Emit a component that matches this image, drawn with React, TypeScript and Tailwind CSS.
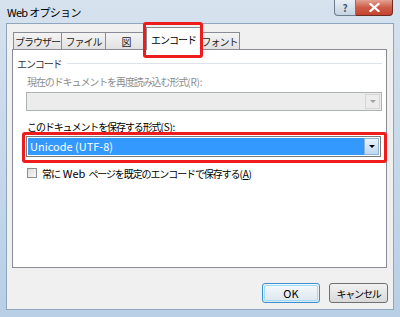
import React from "react";

function Tab({ label, selected, w }: { label: string; selected?: boolean; w: string }) {
  if (selected) {
    return (
      <div
        className={`${w} h-[23px] -mb-[1px] -ml-[1px] -mr-[1px] relative z-10 bg-white border border-[#898c95] border-b-0 flex items-center justify-center text-[10px] tracking-[-1px] whitespace-nowrap text-black`}
      >
        {label}
      </div>
    );
  }
  return (
    <div
      className={`${w} h-[17px] bg-gradient-to-b from-[#f4f4f4] to-[#e2e2e2] border border-[#898c95] border-b-0 -ml-[1px] first:ml-0 flex items-center justify-center text-[10px] tracking-[-1px] whitespace-nowrap text-[#222]`}
    >
      {label}
    </div>
  );
}

function Ascii({ children }: { children: React.ReactNode }) {
  return <span className="tracking-[-0.2px]">{children}</span>;
}

export default function App() {
  return (
    <div className="w-[400px] h-[317px] flex flex-col bg-gradient-to-b from-[#d6e2ee] via-[#c6d8ea] to-[#b8cfe6] font-['Noto_Sans_CJK_JP','Noto_Sans',sans-serif] relative overflow-hidden">
      {/* title bar */}
      <div className="h-[23px] flex items-start relative">
        <div className="pl-[7px] pt-[4px] text-[11px] tracking-[-0.7px] text-black leading-[16px] whitespace-nowrap">Web オプション</div>
        <div className="ml-auto mr-[7px] flex">
          <div className="w-[22px] h-[16px] border border-[#6d7b8c] border-t-0 rounded-bl-[4px] bg-gradient-to-b from-[#e8eef5] to-[#c5d3e2] flex items-center justify-center text-[10px] text-[#4a5a6e] font-bold leading-none">
            ?
          </div>
          <div className="w-[37px] h-[16px] border border-[#6d2a22] border-t-0 border-l-0 rounded-br-[4px] bg-gradient-to-b from-[#e3a192] via-[#cc5b47] to-[#c5432f] flex items-center justify-center">
            <svg width="11" height="9" viewBox="0 0 11 9">
              <path d="M1.5 1 L9.5 8 M9.5 1 L1.5 8" stroke="white" strokeWidth="2.2" strokeLinecap="square" />
            </svg>
          </div>
        </div>
      </div>

      {/* client */}
      <div className="mx-[6px] h-[287px] bg-[#f0f0f0] border border-[#8fa6bf] flex flex-col relative">
        {/* tabs */}
        <div className="mt-[8px] ml-[6px] h-[17px] flex items-end">
          <Tab label="ブラウザー" w="w-[49px]" />
          <Tab label="ファイル" w="w-[45px]" />
          <Tab label="図" w="w-[42px]" />
          <Tab label="エンコード" selected w="w-[55px]" />
          <Tab label="フォント" w="w-[41px]" />
        </div>
        {/* panel */}
        <div className="ml-[5px] w-[375px] h-[219px] bg-white border border-[#898c95] relative text-[10px] tracking-[-1.1px]">
          {/* group label */}
          <div className="flex items-center mt-[5px] ml-[4px] h-[16px]">
            <span className="text-[#333]">エンコード</span>
            <div className="flex-1 ml-[5px] mr-[4px] h-[1px] bg-[#dde3ea]" />
          </div>
          <div className="ml-[14px] mt-[3px] text-[#8d8d8d] leading-[16px] whitespace-nowrap">
            現在のドキュメントを再度読み込む形式<Ascii>(R):</Ascii>
          </div>
          <div className="ml-[13px] mt-[2px] w-[356px] h-[19px] border border-[#adb2b5] bg-[#ececec] flex justify-end p-[1px]">
            <div className="w-[15px] h-full border border-[#d5d5d5] flex items-center justify-center">
              <svg width="6" height="4" viewBox="0 0 6 4"><path d="M0 0 H6 L3 3 Z" fill="#a0a0a0" /></svg>
            </div>
          </div>
          <div className="ml-[14px] mt-[8px] text-black leading-[16px] whitespace-nowrap">
            このドキュメントを保存する形式<Ascii>(S):</Ascii>
          </div>
          <div className="ml-[13px] mt-[1px] w-[355px] h-[21px] border border-[#7a7a7a] bg-white flex p-[1px]">
            <div className="flex-1 bg-[#3399ff] text-white text-[11px] tracking-normal leading-[17px] pl-[2px]">Unicode (UTF-8)</div>
            <div className="w-[15px] h-full border border-[#8eb1d6] bg-gradient-to-b from-[#eaf4fc] to-[#bcd8f0] flex items-center justify-center">
              <svg width="6" height="4" viewBox="0 0 6 4"><path d="M0 0 H6 L3 3 Z" fill="#000" /></svg>
            </div>
          </div>
          <div className="ml-[14px] mt-[8px] h-[16px] flex items-center">
            <div className="w-[10px] h-[10px] border border-[#8e8f8f] bg-gradient-to-br from-[#dcdcdc] to-[#f8f8f8]" />
            <span className="ml-[5px] text-black leading-[16px] whitespace-nowrap">
              常に<span className="ml-[3px] mr-[3px] text-[11px] tracking-normal">Web</span>ページを既定のエンコードで保存する<Ascii>(<span className="underline">A</span>)</Ascii>
            </span>
          </div>

          {/* red highlight on combo */}
          <div className="absolute left-[9px] top-[82px] w-[365px] h-[31px] border-[3px] border-[#ee1c1c] rounded-[3px]" />
        </div>

        {/* buttons */}
        <div className="mt-[15px] mr-[5px] flex justify-end gap-[9px] text-[10px]">
          <div className="w-[58px] h-[20px] rounded-[3px] border border-[#3c8fd0] bg-gradient-to-b from-[#f5f9fc] to-[#dde7ee] flex items-center justify-center p-[1px]">
            <div className="w-full h-full rounded-[2px] border border-[#9ddcf7] flex items-center justify-center text-black text-[11px]">OK</div>
          </div>
          <div className="w-[59px] h-[20px] rounded-[3px] border border-[#707070] bg-gradient-to-b from-[#f2f2f2] to-[#d9d9d9] flex items-center justify-center text-black tracking-[-1.2px] whitespace-nowrap">
            キャンセル
          </div>
        </div>
      </div>

      {/* red highlight on tab */}
      <div className="absolute left-[143px] top-[22px] w-[60px] h-[36px] border-[3px] border-[#ee1c1c] rounded-[3px] z-20" />
    </div>
  );
}
